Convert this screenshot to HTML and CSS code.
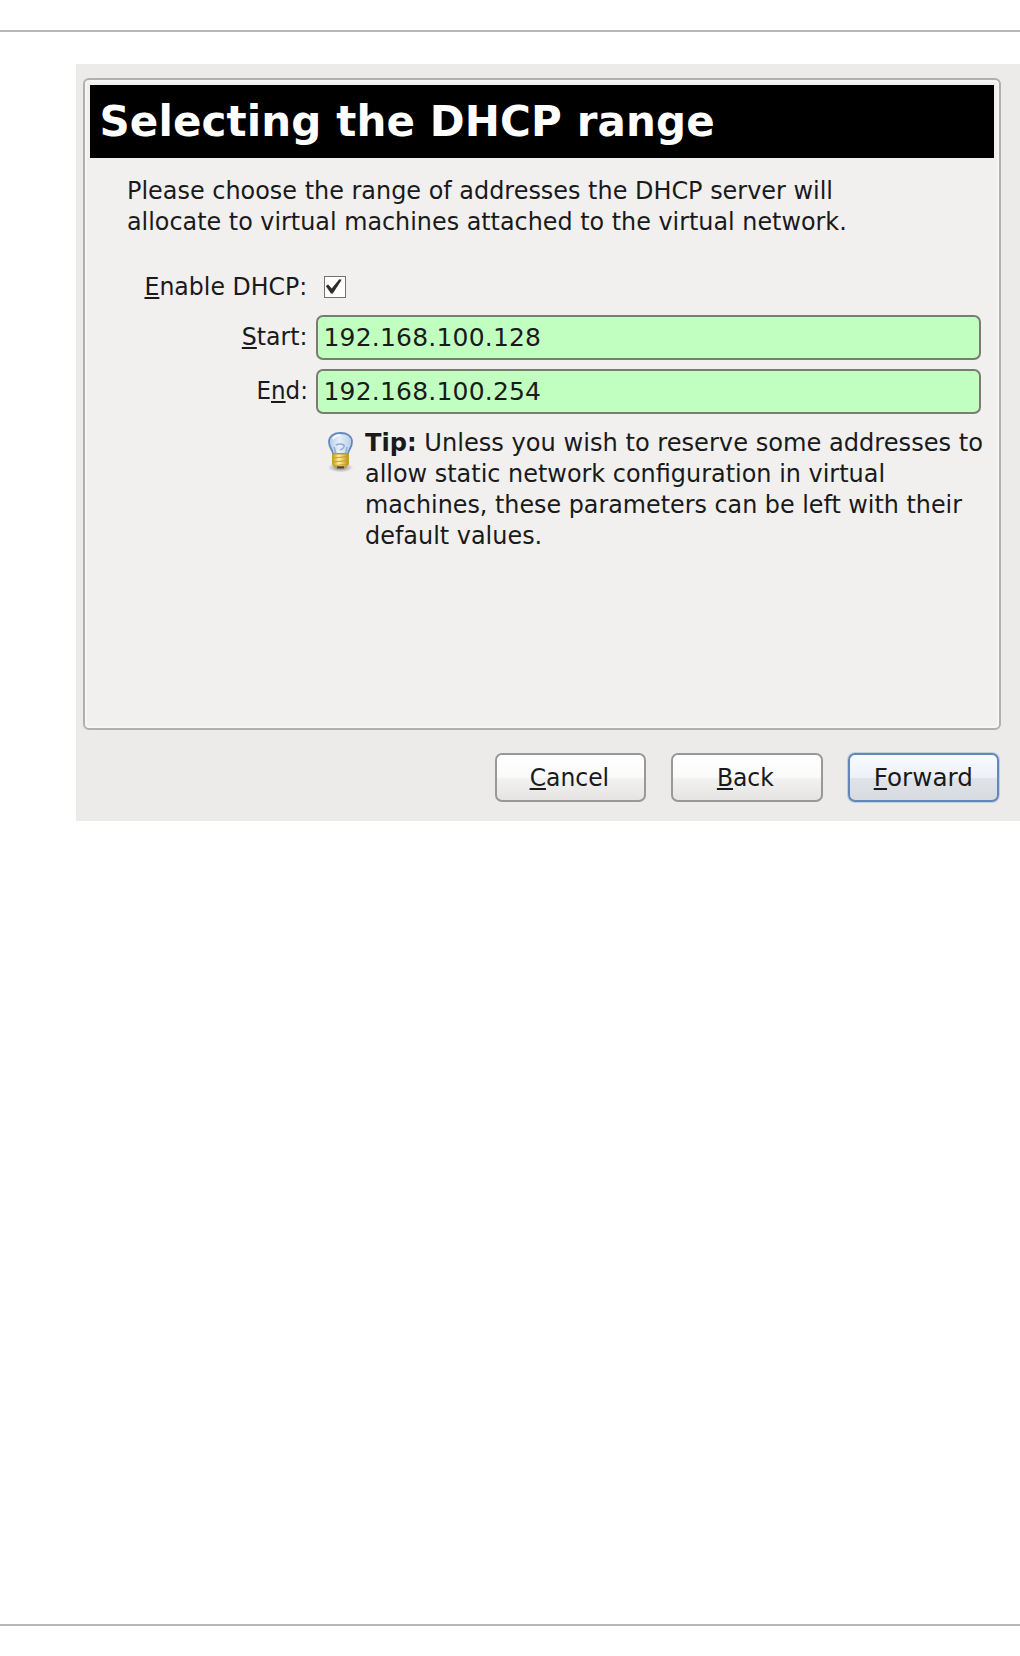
FILE: index.html
```html
<!DOCTYPE html>
<html lang="en">
<head>
<meta charset="utf-8">
<title>Selecting the DHCP range</title>
<link rel="stylesheet" href="styles.css">
</head>
<body>
<main class="page">
  <section class="dialog">
    <div class="panel">
      <h1 class="title">Selecting the DHCP range</h1>
      <p class="intro"><span class="line i1">Please choose the range of addresses the DHCP server will</span><span class="line i2">allocate to virtual machines attached to the virtual network.</span></p>
      <form class="form">
        <label class="label enable"><u>E</u>nable DHCP:</label>
        <span class="check"><svg viewBox="0 0 22 22"><path d="M2.8 10 5.2 8.5 8.7 12.5 16.3 3.3 18.7 3.8 9.8 17.5 8 17.5Z" fill="#2b2b2b"/></svg></span>
        <label class="label start"><u>S</u>tart:</label>
        <div class="field"><span class="value">192.168.100.128</span></div>
        <label class="label end">E<u>n</u>d:</label>
        <div class="field"><span class="value">192.168.100.254</span></div>
      </form>
      <div class="tip">
        <svg class="bulb" viewBox="0 0 28 42">
          <defs>
            <radialGradient id="shade"><stop offset="0" stop-color="#333" stop-opacity=".75"/><stop offset="1" stop-color="#777" stop-opacity="0"/></radialGradient>
            <linearGradient id="glass" x2="1"><stop offset="0" stop-color="#b5cbe6"/><stop offset=".45" stop-color="#e6eef8"/><stop offset="1" stop-color="#b9cee8"/></linearGradient>
            <linearGradient id="brass" x2="1"><stop offset="0" stop-color="#c69b18"/><stop offset=".4" stop-color="#fff0a0"/><stop offset="1" stop-color="#bd9010"/></linearGradient>
          </defs>
          <ellipse cx="14.5" cy="36.5" rx="13" ry="5" fill="url(#shade)"/>
          <path d="M7 23C7 18.5 3 17 3 11 3 5 8 2 14.5 2S26 5 26 11C26 17 22 18.5 22 23Z" fill="url(#glass)" stroke="#6389bd" stroke-width="1.8"/>
          <path d="M10 14Q14 12 18 14Q19 17 14 19M10 23 8 16M19.5 23 21 16" fill="none" stroke="#8dadd6" stroke-width="1.5"/>
          <path d="M7 8Q9 4 14 4" fill="none" stroke="#fff" stroke-width="1.5"/>
          <path d="M6.5 23H22.5V33Q21 36 18 36H11Q7 36 6.5 33Z" fill="url(#brass)" stroke="#c7a126"/>
          <path d="M7 27 22 25.5M7 31 22 29.5M8 34.5 21 33.5" stroke="#c79f25" stroke-width="1.2"/>
          <path d="M11 36.3H18" stroke="#4c4733" stroke-width="2"/>
        </svg>
        <p class="tiptext"><span class="line t1"><b>Tip:</b> Unless you wish to reserve some addresses to</span><span class="line t2">allow static network configuration in virtual</span><span class="line t3">machines, these parameters can be left with their</span><span class="line t4">default values.</span></p>
      </div>
    </div>
    <div class="actions">
      <button class="button"><span class="caption"><u>C</u>ancel</span></button>
      <button class="button"><span class="caption"><u>B</u>ack</span></button>
      <button class="button primary"><span class="caption wide"><u>F</u>orward</span></button>
    </div>
  </section>
</main>
</body>
</html>
```
FILE: styles.css
```css
* { box-sizing: border-box; }
body { margin: 0; background: #fff; color: #1a1a1a; font: 25px/31px "DejaVu Sans", sans-serif; }
p, h1 { margin: 0; }
.page { height: 1596px; margin-top: 30px; border-top: 2px solid #b8b8b8; border-bottom: 2px solid #b8b8b8; padding: 32px 0 0 76px; }
.dialog { height: 757px; width: 943.5px; padding: 14px 18.5px 0 7px; background: #ecebea; }
.panel { height: 651.5px; border: 2px solid #b1b0af; border-radius: 6px; background: #f1f0ef; padding: 5px; box-shadow: inset 0 0 0 2px #f7f6f5; }
.title { height: 73px; background: #000; color: #fff; font-size: 42px; letter-spacing: .12px; line-height: 74px; padding-left: 9.5px; white-space: nowrap; }
.intro { padding: 17px 0 0 36.5px; }
.line { display: block; white-space: nowrap; width: max-content; transform-origin: left; transform: scaleX(.957); }
.i2 { transform: scaleX(.954); }
.t1 { transform: scaleX(.9646); }
.t3 { transform: scaleX(.953); }
.form { display: grid; grid-template-columns: 217.5px 664.5px; grid-template-rows: 42px 44.5px 44.5px; column-gap: 8.5px; row-gap: 9.5px; padding-top: 26.5px; margin: 0; }
.label { justify-self: end; line-height: 43px; white-space: nowrap; transform-origin: right; transform: scaleX(.945); }
.enable { line-height: 45px; }
.end { transform: scaleX(.92); line-height: 44px; }
u { text-decoration: underline 2px; text-underline-offset: 2px; text-decoration-skip-ink: none; }
.check { width: 22px; height: 22px; margin: 12.5px 0 0 7.5px; border: 1.5px solid #77716b; background: #fff; }
.check svg { display: block; width: 22px; height: 22px; margin: -1.5px; }
.field { border: 2px solid #797c70; border-radius: 7px; background: #c1ffc0; padding-left: 5.5px; line-height: 42px; letter-spacing: .2px; }
.tip { display: flex; padding: 14.5px 0 0 236px; }
.bulb { width: 28px; height: 42px; flex: none; margin-top: 3px; }
.tiptext { padding-left: 10.5px; margin-top: -1.5px; }
.actions { display: flex; justify-content: flex-end; gap: 25px; padding: 23px 2px 0 0; }
.button { width: 151.5px; height: 49.5px; border: 2px solid #999896; border-radius: 7px; padding: 0; font: inherit; color: inherit; background: linear-gradient(#fff, #fafafa 50%, #f2f2f1 51%, #e5e4e2); }
.caption { display: inline-block; transform: translateX(-1px) scaleX(.938); }
.wide { transform: scaleX(.985); }
.primary { border-color: #6388b8; background: linear-gradient(#f8fbff, #edf1f7 50%, #e0e4e9 51%, #d7dbe0); box-shadow: 0 0 0 1px #c2cedd; }
```
